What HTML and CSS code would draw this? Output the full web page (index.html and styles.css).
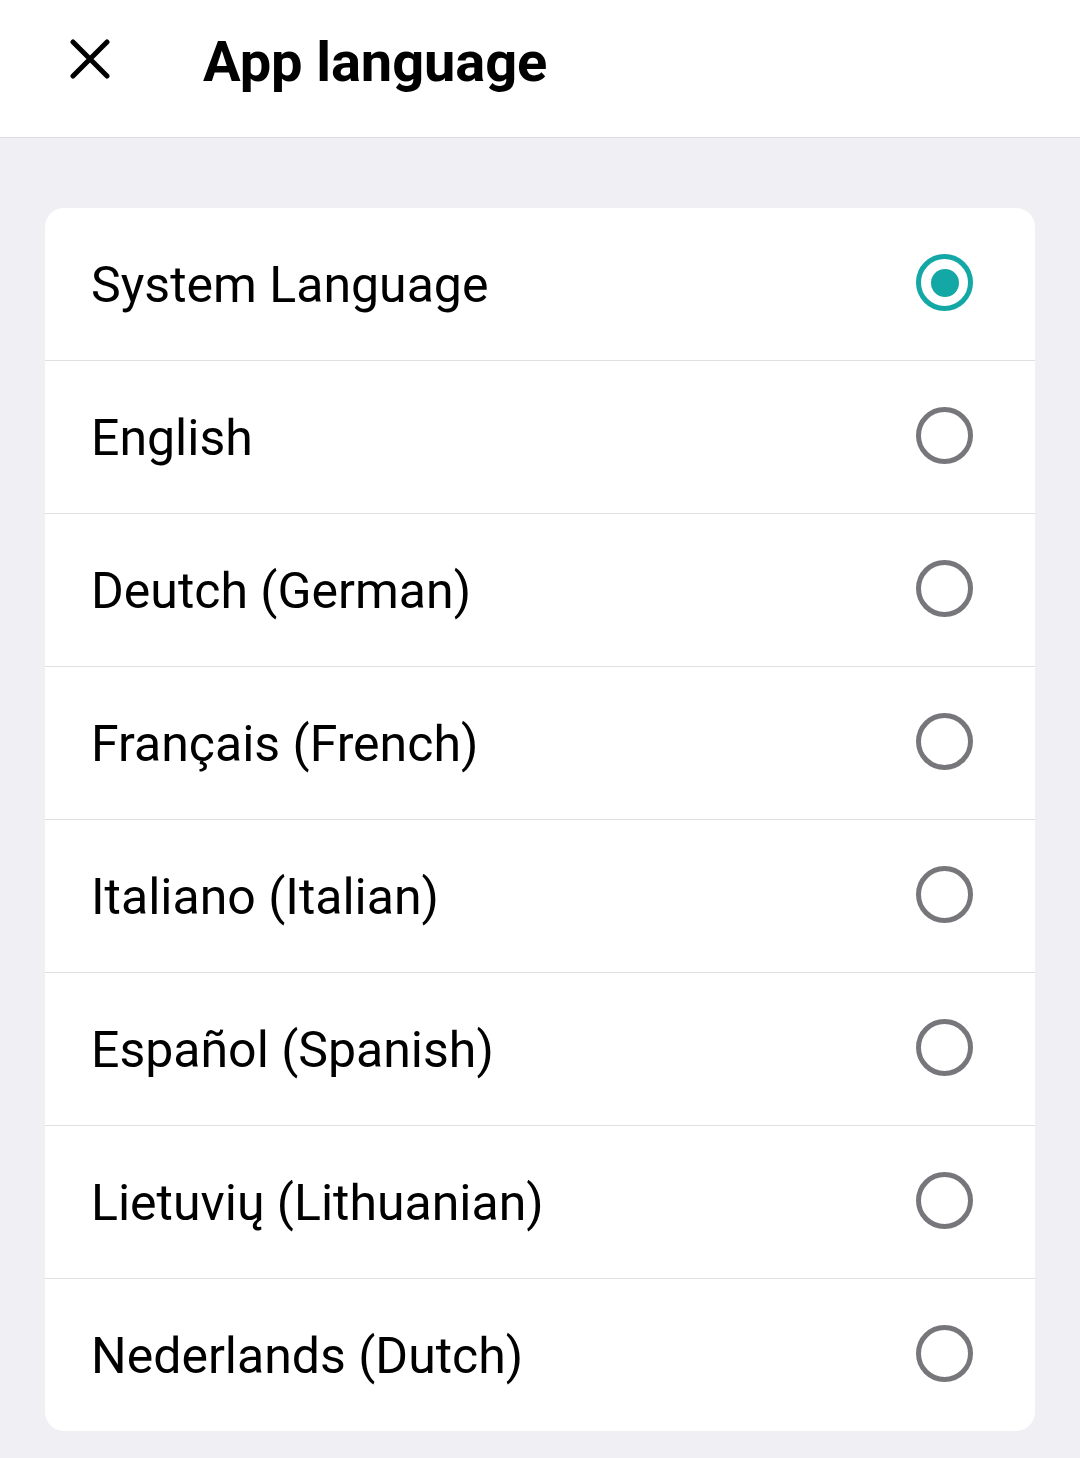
FILE: index.html
```html
<!DOCTYPE html>
<html lang="en">
<head>
    <meta charset="UTF-8">
    <meta name="viewport" content="width=device-width, initial-scale=1.0">
    <title>App language</title>
    <link rel="stylesheet" href="styles.css">
</head>
<body>
    <div class="header">
        <button class="close" aria-label="Close">
            <svg width="40" height="40" viewBox="0 0 40 40">
                <path d="M3 3 L37 37 M37 3 L3 37" stroke="#000" stroke-width="5" stroke-linecap="round" fill="none"/>
            </svg>
        </button>
        <h1>App language</h1>
    </div>

    <div class="content">
        <div class="card">
            <label class="row">
                <span class="name">System Language</span>
                <span class="radio checked"></span>
            </label>
            <label class="row">
                <span class="name">English</span>
                <span class="radio"></span>
            </label>
            <label class="row">
                <span class="name">Deutch (German)</span>
                <span class="radio"></span>
            </label>
            <label class="row">
                <span class="name">Français (French)</span>
                <span class="radio"></span>
            </label>
            <label class="row">
                <span class="name">Italiano (Italian)</span>
                <span class="radio"></span>
            </label>
            <label class="row">
                <span class="name">Español (Spanish)</span>
                <span class="radio"></span>
            </label>
            <label class="row">
                <span class="name">Lietuvių (Lithuanian)</span>
                <span class="radio"></span>
            </label>
            <label class="row">
                <span class="name">Nederlands (Dutch)</span>
                <span class="radio"></span>
            </label>
        </div>
    </div>
</body>
</html>
```

FILE: styles.css
```css
body { margin: 0; font-family: Roboto, "Noto Sans", sans-serif; background-color: #efeff4; color: #000; }
.header { height: 138px; box-sizing: border-box; padding-bottom: 20px; background: white; border-bottom: 1px solid #dedee2; display: flex; align-items: center; }
.close { background: none; border: none; padding: 0; margin-left: 70px; width: 40px; height: 40px; display: flex; }
.header h1 { margin: 0 0 0 93px; font-size: 56px; font-weight: 700; letter-spacing: -0.1px; line-height: 1; padding-top: 6px; }
.content { padding: 70px 45px 27px; }
.card { background: white; border-radius: 19px; overflow: hidden; }
.row { height: 152px; display: flex; align-items: center; justify-content: space-between; padding: 0 62px 0 46px; border-bottom: 1px solid #e0e0e0; }
.row:last-child { border-bottom: none; }
.name { font-size: 50px; font-weight: 400; padding-top: 2px; }
.radio { width: 47px; height: 47px; border: 5px solid #77767b; border-radius: 50%; position: relative; margin-top: -3px; }
.radio.checked { border-color: #13a8a5; }
.radio.checked::after { content: ""; position: absolute; left: 9.5px; top: 9.5px; width: 28px; height: 28px; border-radius: 50%; background: #13a8a5; }
```
